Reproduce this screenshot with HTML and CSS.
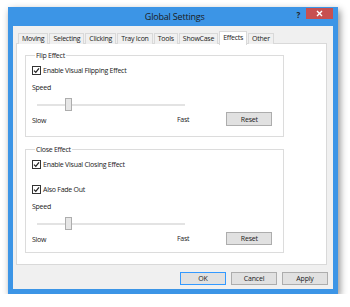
FILE: index.html
```html
<!DOCTYPE html>
<html lang="en">
<head>
  <meta charset="UTF-8">
  <title>Global Settings</title>
  <link rel="stylesheet" href="styles.css">
</head>
<body>

  <div class="window">
    <div class="titlebar">
      <span class="title">Global Settings</span>
      <span class="help">?</span>
      <span class="close">
        <svg width="7" height="7" viewBox="0 0 7 7"><path d="M1 1L6 6M6 1L1 6" stroke="#fff" stroke-width="1.4"/></svg>
      </span>
    </div>

    <div class="client">
      <div class="tabs">
        <span class="tab">Moving</span>
        <span class="tab">Selecting</span>
        <span class="tab">Clicking</span>
        <span class="tab">Tray Icon</span>
        <span class="tab">Tools</span>
        <span class="tab">ShowCase</span>
        <span class="tab active">Effects</span>
        <span class="tab">Other</span>
      </div>

      <div class="panel">
        <fieldset class="group flip">
          <legend>Flip Effect</legend>
          <label class="check"><span class="box"><svg width="7" height="7" viewBox="0 0 7 7"><path d="M1 3.6L2.8 5.4L6 1.4" fill="none" stroke="#222" stroke-width="1.3"/></svg></span>Enable Visual Flipping Effect</label>
          <div class="speed">Speed</div>
          <div class="slider"><span class="track"></span><span class="thumb"></span></div>
          <div class="scale-row">
            <span class="slow">Slow</span>
            <span class="fast">Fast</span>
            <button class="btn">Reset</button>
          </div>
        </fieldset>

        <fieldset class="group close-fx">
          <legend>Close Effect</legend>
          <label class="check"><span class="box"><svg width="7" height="7" viewBox="0 0 7 7"><path d="M1 3.6L2.8 5.4L6 1.4" fill="none" stroke="#222" stroke-width="1.3"/></svg></span>Enable Visual Closing Effect</label>
          <label class="check fade"><span class="box"><svg width="7" height="7" viewBox="0 0 7 7"><path d="M1 3.6L2.8 5.4L6 1.4" fill="none" stroke="#222" stroke-width="1.3"/></svg></span>Also Fade Out</label>
          <div class="speed">Speed</div>
          <div class="slider"><span class="track"></span><span class="thumb"></span></div>
          <div class="scale-row">
            <span class="slow">Slow</span>
            <span class="fast">Fast</span>
            <button class="btn">Reset</button>
          </div>
        </fieldset>
      </div>

      <div class="actions">
        <button class="btn default">OK</button>
        <button class="btn">Cancel</button>
        <button class="btn">Apply</button>
      </div>
    </div>
  </div>

</body>
</html>
```

FILE: styles.css
```css
body {
  margin: 0;
  padding: 7px 0 0 8px;
  background: #fff;
  font-family: 'Open Sans', 'Noto Sans', sans-serif;
  font-size: 7px;
  line-height: 9px;
  letter-spacing: -0.25px;
  color: #1a1a1a;
}

.window {
  width: 320px;
  padding: 0 5px 5px;
  background: #3c95e6;
  box-shadow: 2px 3px 7px rgba(0,0,0,0.45);
}

/* title bar */
.titlebar {
  height: 19px;
  display: flex;
  align-items: flex-start;
}

.title {
  flex: 1;
  text-align: center;
  font-size: 9px;
  line-height: 19px;
  letter-spacing: -0.2px;
  color: #1b1b1b;
  padding-left: 40px;
}

.help {
  font-size: 8px;
  font-weight: bold;
  line-height: 14px;
  margin-top: 1px;
  margin-right: 6px;
  color: #222;
}

.close {
  width: 27px;
  height: 11px;
  margin-top: 1px;
  background: #c75050;
  display: flex;
  align-items: center;
  justify-content: center;
}

/* client */
.client {
  background: #f0f0f0;
  height: 263px;
  padding: 5px 6px 0 3px;
  box-sizing: border-box;
}

.tabs {
  display: flex;
  align-items: flex-end;
  gap: 1px;
  margin-left: 2px;
  height: 13px;
  position: relative;
  z-index: 1;
}

.tab {
  height: 11px;
  padding: 0 3px;
  border: 1px solid #d9d9d9;
  border-bottom: none;
  background: #f0f0f0;
  box-sizing: border-box;
  line-height: 10px;
}

.tab.active {
  height: 14px;
  margin-bottom: -1px;
  background: #fff;
  line-height: 12px;
}

.panel {
  height: 222px;
  margin-top: -1px;
  border: 1px solid #d9d9d9;
  background: #fff;
  box-sizing: border-box;
  padding: 7px 0 0 8px;
}

/* group boxes */
.group {
  width: 259px;
  margin: 0;
  padding: 6px 6px 10px 6px;
  border: 1px solid #dcdcdc;
  box-sizing: border-box;
}

.group legend {
  padding: 0 1px;
  margin-left: 3px;
}

.close-fx {
  margin-top: 8px;
  padding-bottom: 7px;
}

.check {
  display: flex;
  align-items: center;
  height: 9px;
}

.box {
  width: 7px;
  height: 7px;
  border: 1px solid #333;
  background: #fff;
  margin-right: 2px;
  display: flex;
}

.fade {
  margin-top: 16px;
}

.speed {
  margin-top: 8px;
}

.slider {
  position: relative;
  width: 148px;
  height: 13px;
  margin: 6px 0 0 5px;
  display: flex;
  align-items: center;
}

.track {
  width: 100%;
  height: 2px;
  background: #e3e3e3;
}

.thumb {
  position: absolute;
  left: 28px;
  top: 0;
  width: 7px;
  height: 13px;
  background: #e6e6e6;
  border: 1px solid #adadad;
  box-sizing: border-box;
}

.scale-row {
  display: flex;
  align-items: center;
  margin-top: 1px;
  height: 14px;
}

.slow {
  width: 145px;
  padding-top: 3px;
}

.btn {
  font-family: inherit;
  font-size: 7px;
  line-height: 9px;
  letter-spacing: -0.2px;
  color: #1a1a1a;
  background: #e1e1e1;
  border: 1px solid #adadad;
  border-radius: 0;
  padding: 0;
  width: 46px;
  height: 13px;
}

.scale-row .btn {
  margin-left: 37px;
  height: 14px;
}

.close-fx .scale-row .btn {
  height: 13px;
}

.actions {
  display: flex;
  justify-content: flex-end;
  gap: 5px;
  margin-top: 7px;
  margin-right: -1px;
}

.btn.default {
  border-color: #3399ff;
}
```
